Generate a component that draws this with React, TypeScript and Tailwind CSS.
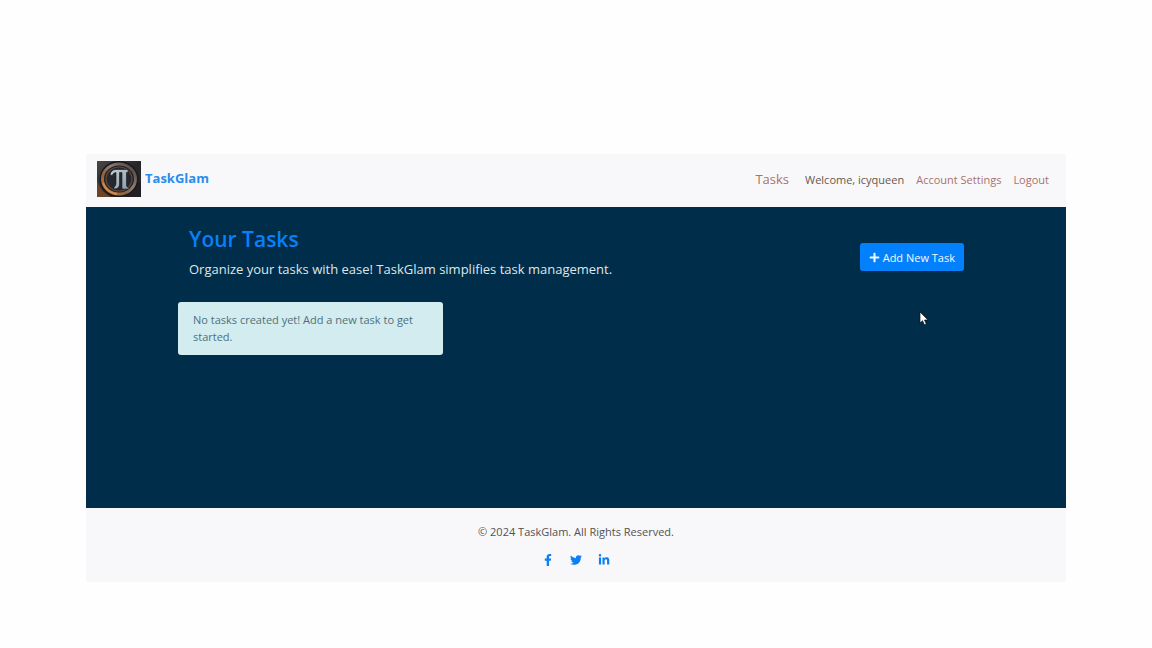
import { FaFacebookF, FaLinkedinIn, FaPlus, FaTwitter } from "react-icons/fa";

function Logo() {
  return (
    <svg viewBox="0 0 44 36" className="h-9 w-11" role="img" aria-label="TaskGlam logo">
      <defs>
        <linearGradient id="plate" x1="0" y1="0" x2="1" y2="1">
          <stop offset="0" stopColor="#4a4745" />
          <stop offset="0.5" stopColor="#26272b" />
          <stop offset="1" stopColor="#2c2b2d" />
        </linearGradient>
        <linearGradient id="ring" x1="0.9" y1="0.1" x2="0.1" y2="0.9">
          <stop offset="0" stopColor="#574a46" />
          <stop offset="0.4" stopColor="#8d7d75" />
          <stop offset="0.7" stopColor="#90603f" />
          <stop offset="1" stopColor="#b8793f" />
        </linearGradient>
        <linearGradient id="metal" x1="0" y1="0" x2="1" y2="1">
          <stop offset="0" stopColor="#c5d0d6" />
          <stop offset="1" stopColor="#8b9da8" />
        </linearGradient>
      </defs>
      <rect width="44" height="36" fill="url(#plate)" />
      <path d="M0 20 Q4 31 14 36 H0Z" fill="#6d4426" />
      <path d="M34 28 L44 20 V36 H28Z" fill="#211f21" />
      <ellipse cx="22" cy="18" rx="17" ry="15.5" fill="#242529" stroke="#18191c" strokeWidth="5" />
      <ellipse cx="22" cy="18" rx="16.5" ry="15" fill="none" stroke="url(#ring)" strokeWidth="3" />
      <ellipse cx="22" cy="18" rx="13" ry="12" fill="#26282d" stroke="#65483a" strokeWidth="1.2" />
      <path d="M6 22 Q10 32 20 33" fill="none" stroke="#d18a49" strokeWidth="2" />
      <path
        d="M13 14 Q14 8.5 19 8.5 H31 V11.5 H29.5 V24.5 Q29.5 26.5 32 26.5 V28 H25 V11.5 H22.5 V23 Q22.5 28 17 28 V26 Q19 25.5 19 22 V11.5 Q16.5 11.5 15 14.5Z"
        fill="url(#metal)"
        stroke="#15171b"
        strokeWidth="0.6"
      />
    </svg>
  );
}

function Pointer() {
  return (
    <svg viewBox="0 0 10 15" className="absolute top-[104px] right-[137px] h-[15px] w-[10px]" aria-hidden="true">
      <path
        d="M1 1 V12 L3.5 9.7 L5.4 13.8 L7.3 12.9 L5.5 9 H9Z"
        fill="#ffffff"
        stroke="#111111"
        strokeWidth="0.7"
      />
    </svg>
  );
}

export default function App() {
  return (
    <div className="min-h-screen bg-[#fefefe] px-4 pt-[154px] font-['Open_Sans','Noto_Sans',sans-serif] text-[11px] leading-[17px]">
      <div className="mx-auto max-w-[980px]">
        <header className="flex flex-wrap items-center justify-between bg-[#f8f8fa] pt-[7px] pr-[17px] pb-[10px] pl-[11px]">
          <a href="#home" className="flex items-center gap-1 text-[13px] font-bold text-[#2b8ceb]">
            <Logo />
            <span className="pb-[2px]">TaskGlam</span>
          </a>
          <nav className="flex items-center gap-3 text-[#a8726c]">
            <a href="#tasks" className="mr-1 text-[13px]">Tasks</a>
            <span className="text-[#66584a]">Welcome, icyqueen</span>
            <a href="#account">Account Settings</a>
            <a href="#logout">Logout</a>
          </nav>
        </header>

        <main className="relative min-h-[301px] bg-[#002d49] px-[92px] pt-[18px]">
          <div className="flex items-center justify-between pr-[10px] pl-[11px]">
            <div>
              <h1 className="text-[21px] leading-7 font-semibold text-[#0a80f8]">Your Tasks</h1>
              <p className="mt-1 text-[13px] leading-6 text-[#dfe6ea]">
                Organize your tasks with ease! TaskGlam simplifies task management.
              </p>
            </div>
            <button
              type="button"
              className="mt-2 flex h-7 items-center gap-[3px] rounded-[3px] bg-[#0380fc] px-[9px] whitespace-nowrap text-[#f2f8ff]"
            >
              <FaPlus className="size-[11px]" />
              Add New Task
            </button>
          </div>
          <div
            role="status"
            className="mt-[21px] w-1/3 rounded-[3px] bg-[#d3ecf0] px-[15px] pt-[9px] pb-[10px] text-[#4d717c]"
          >
            No tasks created yet! Add a new task to get started.
          </div>
          <Pointer />
        </main>

        <footer className="flex flex-col items-center gap-[14px] bg-[#f8f8fa] pt-[15px] pb-4 text-[#55514e]">
          <p>© 2024 TaskGlam. All Rights Reserved.</p>
          <div className="flex gap-4 text-[#0b7ff5]">
            <a href="#facebook" aria-label="Facebook"><FaFacebookF className="size-3" /></a>
            <a href="#twitter" aria-label="Twitter"><FaTwitter className="size-3" /></a>
            <a href="#linkedin" aria-label="LinkedIn"><FaLinkedinIn className="size-3" /></a>
          </div>
        </footer>
      </div>
    </div>
  );
}
